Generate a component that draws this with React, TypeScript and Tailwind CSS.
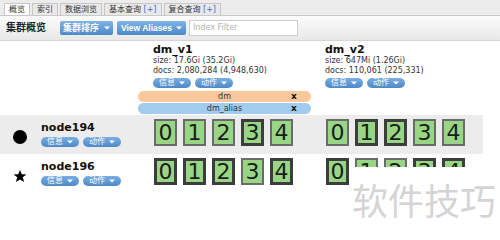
import React from 'react';

const tabs = [
  { name: '概览', plus: false, active: true },
  { name: '索引', plus: false, active: false },
  { name: '数据浏览', plus: false, active: false },
  { name: '基本查询', plus: true, active: false },
  { name: '复合查询', plus: true, active: false },
];

const indices = [
  {
    name: 'dm_v1',
    size: 'size: 17.6Gi (35.2Gi)',
    docs: 'docs: 2,080,284 (4,948,630)',
    aliases: [
      { name: 'dm', cls: 'bg-[#fac89a]' },
      { name: 'dm_alias', cls: 'bg-[#a2ccef]' },
    ],
  },
  {
    name: 'dm_v2',
    size: 'size: 647Mi (1.26Gi)',
    docs: 'docs: 110,061 (225,331)',
    aliases: [],
  },
];

// primary shard numbers per node, per index
const nodes = [
  { name: 'node194', icon: 'circle', bg: 'bg-[#ececec]', primaries: [[3], [1, 2]] },
  { name: 'node196', icon: 'star', bg: 'bg-white', primaries: [[0, 1, 2, 4], [0, 3, 4]] },
];

const Caret = () => (
  <svg width="6" height="4" viewBox="0 0 6 4" className="shrink-0">
    <path d="M0 0.5 L6 0.5 L3 3.5 Z" fill="white" />
  </svg>
);

const Pill: React.FC<{ label: string }> = ({ label }) => (
  <div className="flex h-[10px] w-[38px] items-center justify-center gap-[4px] rounded-full bg-gradient-to-b from-[#79aee3] to-[#4d88c6] text-[8px] leading-none text-white">
    <span>{label}</span>
    <Caret />
  </div>
);

const Shard: React.FC<{ n: number; primary: boolean }> = ({ n, primary }) => (
  <div
    className={`flex h-[27px] w-[23px] items-center justify-center bg-[#98d686] text-[22px] leading-none text-[#1c1c1c] ${
      primary ? 'border-[3px] border-[#3d3d3d]' : 'border-2 border-[#6b6b6b]'
    }`}
  >
    {n}
  </div>
);

export default function App() {
  return (
    <div className="relative h-[240px] w-[500px] overflow-hidden bg-white font-['DejaVu_Sans','Noto_Sans_CJK_SC',sans-serif] text-[#222]">
      {/* tab bar */}
      <div className="flex h-[16px] items-end gap-[2px] border-b border-[#c9c9c9] bg-[#ececec] pl-[4px]">
        {tabs.map((t) => (
          <div
            key={t.name}
            className={`h-[12px] border border-b-0 border-[#c6c6c6] px-[4px] text-[8px] leading-[11px] text-[#333] ${
              t.active ? 'bg-white' : 'bg-[#e9e9e9]'
            }`}
          >
            {t.name}
            {t.plus && <span className="text-[#3b6fd1]"> [+]</span>}
          </div>
        ))}
      </div>

      {/* toolbar */}
      <div className="flex h-[25px] items-center border-b border-[#d6d6d6] bg-gradient-to-b from-[#fcfcfc] to-[#e8e8e8] pl-[6px]">
        <div className="w-[54px] text-[10px] font-bold leading-none text-[#222]">集群概览</div>
        <div className="flex h-[14px] w-[53px] items-center justify-center gap-[5px] rounded-[2px] bg-gradient-to-b from-[#80b3e4] to-[#4d89c8] text-[9px] font-bold leading-none text-white">
          <span>集群排序</span>
          <Caret />
        </div>
        <div className="ml-[4px] flex h-[14px] w-[69px] items-center justify-center gap-[4px] rounded-[2px] bg-gradient-to-b from-[#80b3e4] to-[#4d89c8] font-['Liberation_Sans',sans-serif] text-[8.5px] font-bold leading-none text-white">
          <span>View Aliases</span>
          <Caret />
        </div>
        <div className="ml-[3px] flex h-[16px] w-[109px] items-center border border-[#cfcfcf] bg-white pl-[3px] text-[8px] text-[#b3b3b3]">
          Index Filter
        </div>
      </div>

      {/* index headers */}
      <div className="flex">
        <div className="w-[138px] shrink-0" />
        {indices.map((idx) => (
          <div key={idx.name} className="w-[172px] shrink-0 pt-[2px]">
            <div className="pl-[15px] text-[11px] font-bold leading-[13px] text-[#111]">{idx.name}</div>
            <div className="pl-[15px] text-[8px] leading-[10px] text-[#333]">{idx.size}</div>
            <div className="pl-[15px] text-[8px] leading-[10px] text-[#333]">{idx.docs}</div>
            <div className="mt-[2px] flex gap-[4px] pl-[15px]">
              <Pill label="信息" />
              <Pill label="动作" />
            </div>
            {idx.aliases.length > 0 && (
              <div className="mt-[3px] flex flex-col gap-[1px] pb-[1px]">
                {idx.aliases.map((a) => (
                  <div
                    key={a.name}
                    className={`flex h-[11px] w-[173px] items-center rounded-full pl-[20px] pr-[12px] text-[8px] leading-none text-[#333] ${a.cls}`}
                  >
                    <span className="flex-1 text-center">{a.name}</span>
                    <span className="w-[8px] text-[9px] font-bold text-[#111]">x</span>
                  </div>
                ))}
              </div>
            )}
          </div>
        ))}
      </div>

      {/* node rows */}
      {nodes.map((node) => (
        <div key={node.name} className={`flex h-[39px] w-[483px] ${node.bg}`}>
          <div className="flex w-[138px] shrink-0 items-start pl-[13px] pt-[6px]">
            <div className="mt-[9px] flex h-[14px] w-[14px] items-center justify-center">
              {node.icon === 'circle' ? (
                <div className="h-[14px] w-[14px] rounded-full bg-black" />
              ) : (
                <svg width="16" height="16" viewBox="0 0 24 24">
                  <path d="M12 1.5 L15 9 L23 9.3 L16.8 14.3 L19 22.3 L12 17.8 L5 22.3 L7.2 14.3 L1 9.3 L9 9 Z" fill="black" />
                </svg>
              )}
            </div>
            <div className="ml-[14px]">
              <div className="text-[11px] font-bold leading-[13px] text-[#111]">{node.name}</div>
              <div className="mt-[3px] flex gap-[4px]">
                <Pill label="信息" />
                <Pill label="动作" />
              </div>
            </div>
          </div>
          {indices.map((idx, i) => (
            <div key={idx.name} className="flex w-[172px] shrink-0 gap-[6px] pl-[16px] pt-[4px]">
              {[0, 1, 2, 3, 4].map((n) => (
                <Shard key={n} n={n} primary={node.primaries[i].includes(n)} />
              ))}
            </div>
          ))}
        </div>
      ))}

      {/* watermark */}
      <div className="absolute left-[352px] top-[167px] h-[73px] w-[148px] bg-white pt-[14px] font-['Noto_Sans_CJK_SC',sans-serif] text-[36px] leading-none text-[#d4d4d4]">
        软件技巧
      </div>
    </div>
  );
}
